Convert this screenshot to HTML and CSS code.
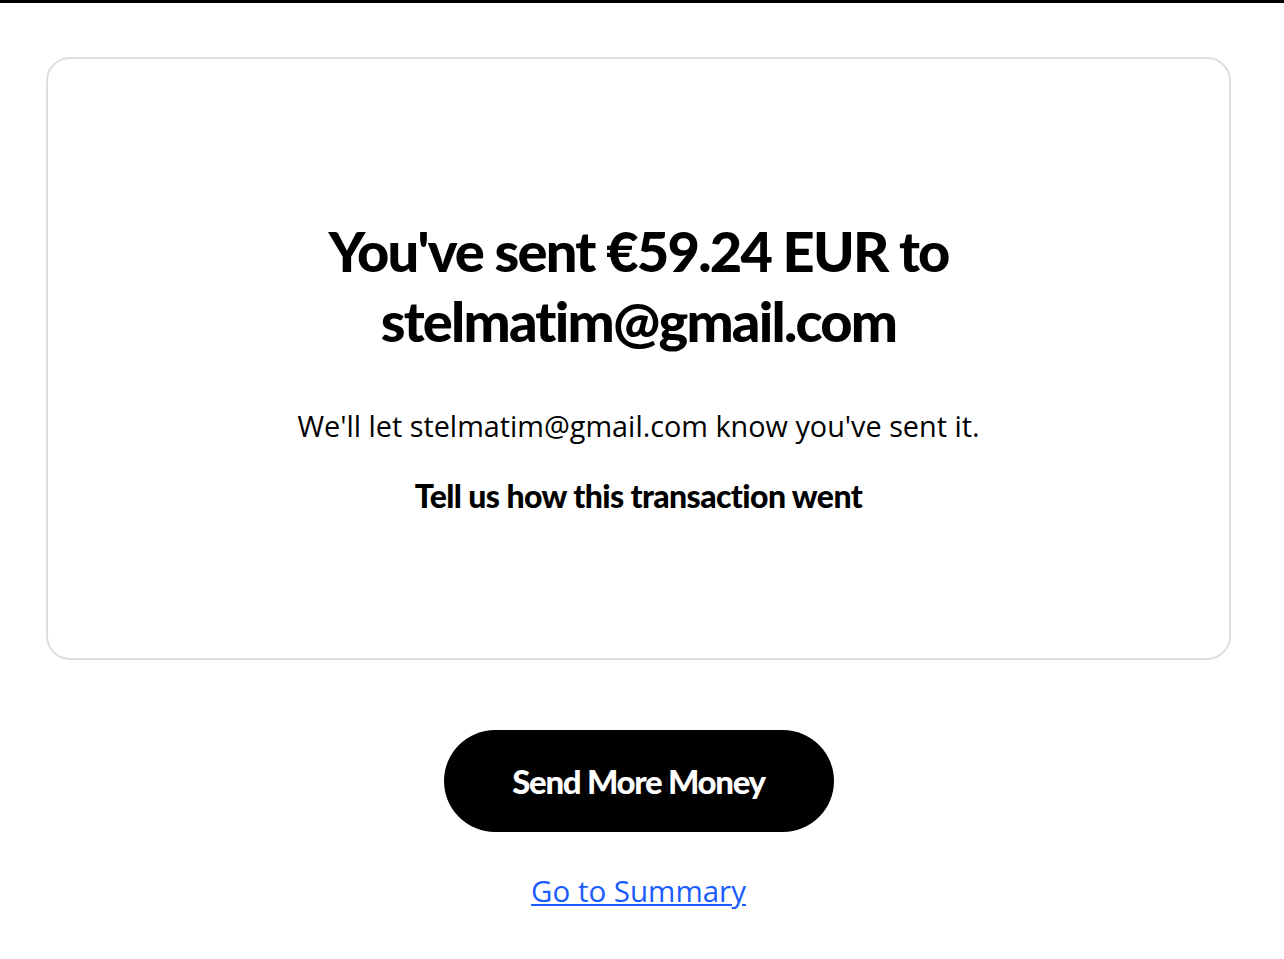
FILE: index.html
```html
<!DOCTYPE html>
<html lang="en">
<head>
    <meta charset="UTF-8">
    <meta name="viewport" content="width=device-width, initial-scale=1.0">
    <title>Payment Sent</title>
    <link rel="stylesheet" href="styles.css">
</head>
<body>
    <div class="top-bar"></div>
    <div class="page">
        <div class="card">
            <h1>You've sent €59.24 EUR to<br>stelmatim@gmail.com</h1>
            <p class="notice">We'll let stelmatim@gmail.com know you've sent it.</p>
            <p class="feedback">Tell us how this transaction went</p>
        </div>
        <div class="actions">
            <button class="primary">Send More Money</button>
            <a href="#" class="summary-link">Go to Summary</a>
        </div>
    </div>
</body>
</html>
```

FILE: styles.css
```css
body {
    margin: 0;
    background-color: #fff;
    font-family: Lato, "Open Sans", sans-serif;
    color: #000;
}
.top-bar {
    height: 3px;
    background-color: #000;
}
.page {
    padding: 54px 53px 0 46px;
}
.card {
    box-sizing: border-box;
    height: 603px;
    border: 2px solid #dedede;
    border-radius: 24px;
    padding-top: 157px;
    text-align: center;
}
h1 {
    margin: 0;
    font-size: 56px;
    font-weight: 900;
    line-height: 70px;
    letter-spacing: -1.8px;
}
.notice {
    margin: 50px 0 0;
    font-family: "Open Sans", sans-serif;
    font-size: 28.8px;
    letter-spacing: 0;
}
.feedback {
    margin: 31px 0 0;
    font-size: 32px;
    font-weight: 900;
    letter-spacing: -0.6px;
}
.actions {
    display: flex;
    flex-direction: column;
    align-items: center;
    margin-top: 70px;
}
.primary {
    width: 390px;
    height: 102px;
    border: none;
    border-radius: 51px;
    background-color: #000;
    color: #fff;
    font-family: Lato, sans-serif;
    font-size: 33px;
    font-weight: 900;
    letter-spacing: -1.3px;
    cursor: pointer;
}
.summary-link {
    margin-top: 38px;
    color: #1a5cff;
    font-family: "Open Sans", sans-serif;
    font-size: 29.5px;
    letter-spacing: 0;
}
```
